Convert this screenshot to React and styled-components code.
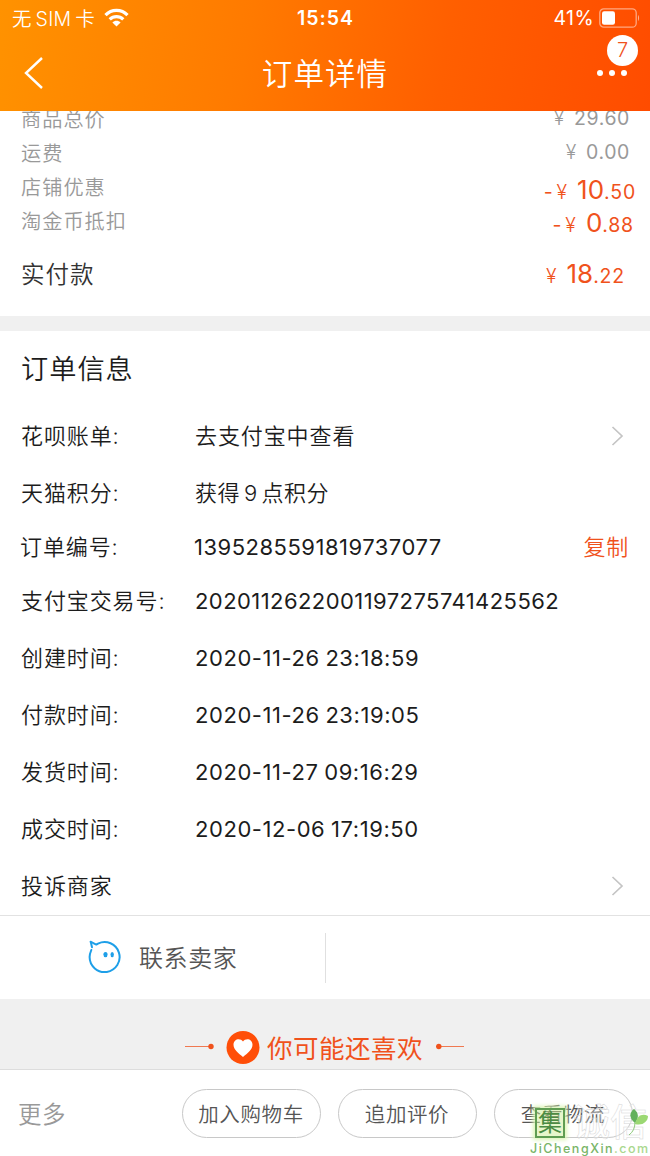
import React from 'react';
import styled, { createGlobalStyle } from 'styled-components';

const GlobalStyle = createGlobalStyle`
  * {
    box-sizing: border-box;
  }
  body {
    margin: 0;
    background: #fff;
    font-family: Inter, 'Noto Sans CJK SC', sans-serif;
    font-weight: 350;
    color: #1c1c1c;
  }
`;

const Page = styled.div`
  position: relative;
  width: 650px;
  height: 1156px;
  overflow: hidden;
  display: flex;
  flex-direction: column;
  white-space: nowrap;
`;

const Header = styled.header`
  position: relative;
  z-index: 1;
  flex: none;
  height: 111px;
  color: #fff;
  background: linear-gradient(100deg, #ff9200 0%, #ff7a00 38%, #ff5f00 68%, #ff4c00 100%);
`;

const StatusBar = styled.div`
  display: grid;
  grid-template-columns: 1fr auto 1fr;
  align-items: center;
  height: 35px;
  padding: 0 10px 0 12px;
  font-size: 19.5px;
  font-weight: 400;
`;

const Carrier = styled.div`
  display: flex;
  align-items: center;
  gap: 9px;
  font-weight: 350;
  letter-spacing: 0.3px;
  word-spacing: -2px;
`;

const Clock = styled.div`
  padding-right: 1px;
  font-size: 19.5px;
  font-weight: 600;
  letter-spacing: 1px;
`;

const Power = styled.div`
  display: flex;
  justify-content: flex-end;
  align-items: center;
  gap: 5px;
  letter-spacing: 0.4px;
`;

const NavBar = styled.div`
  display: grid;
  grid-template-columns: 1fr auto 1fr;
  align-items: center;
  height: 75px;
  padding: 0 23px;
`;

const Title = styled.h1`
  margin: 0;
  padding-bottom: 1px;
  font-size: 30.5px;
  font-weight: 350;
  letter-spacing: 1.1px;
`;

const More = styled.div`
  position: relative;
  justify-self: end;
  display: flex;
  gap: 6px;
`;

const Dot = styled.i`
  width: 6px;
  height: 6px;
  border-radius: 50%;
  background: #fff;
`;

const Badge = styled.span`
  position: absolute;
  right: -11px;
  bottom: 10px;
  width: 31px;
  height: 31px;
  border-radius: 50%;
  background: #fff;
  color: #f0521c;
  font-size: 20px;
  line-height: 31px;
  text-align: center;
`;

/* scrolled up a little, so the first line slides under the header */
const Summary = styled.section`
  flex: none;
  height: 215px;
  margin-top: -10px;
`;

const PriceRow = styled.div`
  display: flex;
  justify-content: space-between;
  align-items: center;
  height: ${props => (props.total ? '71px' : '34px')};
  padding-left: 21px;
  padding-right: ${props => props.inset}px;
  color: ${props => (props.total ? '#333' : '#999')};
  font-size: ${props => (props.total ? '23.5px' : '20.2px')};
  letter-spacing: 1px;
`;

const Price = styled.span`
  color: ${props => (props.hot ? '#f0521c' : '#999')};
  font-size: 19.5px;
  font-weight: 400;
  letter-spacing: ${props => (props.hot ? '0.8px' : '0.6px')};
  padding-top: ${props => props.drop || 0}px;

  b {
    font-size: 26px;
    font-weight: 400;
    letter-spacing: 0;
  }
`;

const Currency = styled.span`
  margin-right: 3px;
  margin-left: ${props => (props.spaced ? '3px' : '0')};
  font-weight: 350;
`;

const Strip = styled.div`
  flex: none;
  height: 15px;
  background: #f0f0f0;
`;

const OrderInfo = styled.section`
  flex: none;
  height: 585px;
  border-bottom: 1px solid #e2e2e2;
`;

const Heading = styled.h2`
  display: flex;
  align-items: center;
  height: 77px;
  margin: 0;
  padding: 0 0 5px 21px;
  font-size: 27.2px;
  font-weight: 350;
  letter-spacing: 1px;
`;

const InfoRow = styled.div`
  display: grid;
  grid-template-columns: 174px 1fr auto;
  align-items: center;
  height: ${props => props.height}px;
  padding: 0 21px 1px ${props => (props.shifted ? 20 : 21)}px;
  font-size: 22px;
`;

const Label = styled.span`
  padding-bottom: 4px;
  letter-spacing: 0.9px;
`;

const Value = styled.span`
  padding-bottom: ${props => (props.digits ? '0' : '4px')};
  font-weight: ${props => (props.digits ? 400 : 350)};
  letter-spacing: ${props => props.spacing}px;
  word-spacing: ${props => (props.digits ? '-1px' : '-2.5px')};
`;

const Copy = styled.span`
  padding-bottom: 4px;
  color: #f0521c;
  letter-spacing: 0.8px;
`;

const Arrow = styled.svg`
  margin-right: 5px;
`;

const Contact = styled.section`
  flex: none;
  display: grid;
  grid-template-columns: 326px 1fr;
  align-items: center;
  height: 83px;
`;

const ContactSeller = styled.div`
  display: flex;
  align-items: center;
  gap: 17px;
  height: 50px;
  padding: 0 0 2px 87px;
  border-right: 1px solid #e0e0e0;
  color: #555;
  font-size: 24px;
  letter-spacing: 0.6px;
`;

const Recommend = styled.section`
  flex: none;
  display: flex;
  justify-content: center;
  align-items: flex-start;
  height: 70px;
  padding-top: 31px;
  background: #f0f0f0;
  color: #f0521c;
  font-size: 25.5px;
  line-height: 37px;
`;

const RecommendTitle = styled.div`
  display: flex;
  align-items: flex-start;
  gap: 7px;
  margin: 0 13px 0 12px;
  letter-spacing: 0.5px;
  font-weight: 400;
`;

const Actions = styled.footer`
  flex: none;
  display: flex;
  align-items: center;
  gap: 17px;
  height: 87px;
  padding: 0 17px 0 18px;
  border-top: 1px solid #ddd;
`;

const MoreActions = styled.span`
  flex: 1;
  padding-bottom: 1px;
  color: #999;
  font-size: 23.5px;
  letter-spacing: 0.5px;
`;

const Pill = styled.button`
  width: 139px;
  height: 49px;
  padding: 0 1px 0 0;
  border: 1px solid #c8c8c8;
  border-radius: 25px;
  background: #fff;
  color: #555;
  font: inherit;
  font-size: 20.5px;
  letter-spacing: 0.6px;
`;

const Watermark = styled.div`
  position: absolute;
  right: 0;
  bottom: 0;
  width: 120px;
  height: 52px;
`;

const WatermarkTop = styled.div`
  display: flex;
  align-items: center;
  gap: 8px;
  height: 37px;
  padding-left: 5px;
`;

const Seal = styled.span`
  flex: none;
  width: 30px;
  height: 30px;
  border: 2px solid #5f9d52;
  background: rgba(205, 238, 150, 0.5);
  box-shadow: 0 0 4px 2px #dcf5b8;
  color: #4b8c43;
  font-size: 24px;
  font-weight: 400;
  line-height: 25px;
  text-align: center;
`;

const Ghost = styled.span`
  color: rgba(255, 255, 255, 0.3);
  font-size: 37px;
  font-weight: 500;
  line-height: 36px;
  -webkit-text-stroke: 0.5px #d6d6d6;
`;

const Leaves = styled.svg`
  position: absolute;
  right: 1px;
  top: 4px;
`;

const Domain = styled.div`
  height: 15px;
  color: #79b568;
  font-size: 12.5px;
  font-weight: 500;
  line-height: 15px;
  letter-spacing: 1.5px;

  span {
    color: #a9d88e;
  }
`;

const prices = [
  { label: '商品总价', whole: '29', cents: '.60', inset: 20 },
  { label: '运费', whole: '0', cents: '.00', inset: 20 },
  { label: '店铺优惠', whole: '10', cents: '.50', sign: '-', hot: true, inset: 14, drop: 6 },
  { label: '淘金币抵扣', whole: '0', cents: '.88', sign: '-', hot: true, inset: 16, drop: 5 },
  { label: '实付款', whole: '18', cents: '.22', hot: true, total: true, inset: 25, drop: 1 },
];

const info = [
  { label: '花呗账单:', value: '去支付宝中查看', height: 57, spacing: 0.9, arrow: true },
  { label: '天猫积分:', value: '获得 9 点积分', height: 56, spacing: 0.4 },
  { label: '订单编号:', value: '1395285591819737077', height: 53, spacing: 0.5, digits: true, copy: true, shifted: true },
  { label: '支付宝交易号:', value: '2020112622001197275741425562', height: 55, spacing: 0.43, digits: true },
  { label: '创建时间:', value: '2020-11-26 23:18:59', height: 58, spacing: 0.56, digits: true },
  { label: '付款时间:', value: '2020-11-26 23:19:05', height: 57, spacing: 0.56, digits: true },
  { label: '发货时间:', value: '2020-11-27 09:16:29', height: 57, spacing: 0.56, digits: true },
  { label: '成交时间:', value: '2020-12-06 17:19:50', height: 57, spacing: 0.56, digits: true },
  { label: '投诉商家', height: 57, arrow: true },
];

const Wifi = () => (
  <svg width="25" height="19" viewBox="0 0 25 19" fill="none" stroke="#fff" strokeWidth="3.2">
    <path d="M1.5 7.2C7.5 0.8 17.5 0.8 23.5 7.2" />
    <path d="M5.7 11.4C9.6 7.6 15.4 7.6 19.3 11.4" />
    <path d="M12.5 18.6L8.4 14.5C10.7 12.2 14.3 12.2 16.6 14.5Z" fill="#fff" stroke="none" />
  </svg>
);

const Battery = () => (
  <svg width="41" height="20" viewBox="0 0 41 20">
    <rect x="0.8" y="0.8" width="36.4" height="18.4" rx="4" fill="none" stroke="#fff" strokeOpacity="0.5" strokeWidth="1.3" />
    <rect x="3" y="3.2" width="13" height="13.6" rx="2.2" fill="#fff" />
    <path d="M39 7v6c1.4-.7 1.4-5.3 0-6z" fill="#fff" fillOpacity="0.55" />
  </svg>
);

const Chevron = () => (
  <Arrow width="13" height="20" viewBox="0 0 13 20" fill="none" stroke="#c4c4c4" strokeWidth="1.7">
    <path d="M1.5 1L11 10L1.5 19" />
  </Arrow>
);

const Bubble = () => (
  <svg width="35" height="35" viewBox="0 0 35 35" fill="none" stroke="#1e9fe8" strokeWidth="2" strokeLinecap="round" strokeLinejoin="round">
    <path d="M4.3 11C3.3 13.5 2.6 15.6 2.6 18A15 15 0 1 0 11 4.6L9.3 5.6C7.5 4.8 5.7 3.6 3.6 2.7C4.3 4.7 4.5 6.5 5 8.2" />
    <ellipse cx="18.5" cy="15.6" rx="2.1" ry="2.7" fill="#1e9fe8" stroke="none" />
    <ellipse cx="25.2" cy="15.6" rx="1.7" ry="2.7" fill="#1e9fe8" stroke="none" />
  </svg>
);

const Heart = () => (
  <svg width="34" height="34" viewBox="0 0 34 34">
    <circle cx="17" cy="17.5" r="16.5" fill="#ff4e08" />
    <path d="M17 27C12.5 23.5 7.5 19.5 7.5 14.8C7.5 8.7 14.3 7.5 17 11.5C19.7 7.5 26.5 8.7 26.5 14.8C26.5 19.5 21.5 23.5 17 27Z" fill="#fff" />
  </svg>
);

const Ornament = ({ flip }) => (
  <svg width="29" height="34" viewBox="0 0 29 34">
    <path d="M0 16.5H28" stroke="#f0521c" strokeOpacity="0.75" />
    <circle cx={flip ? 2.8 : 26} cy="16.5" r="2.7" fill="#f0521c" />
  </svg>
);

const App = () => (
  <>
    <GlobalStyle />
    <Page>
      <Header>
        <StatusBar>
          <Carrier>
            无 SIM 卡
            <Wifi />
          </Carrier>
          <Clock>15:54</Clock>
          <Power>
            41%
            <Battery />
          </Power>
        </StatusBar>
        <NavBar>
          <svg width="21" height="32" viewBox="0 0 21 32" fill="none" stroke="#fff" strokeWidth="2.4">
            <path d="M19 1L3 16L19 31" />
          </svg>
          <Title>订单详情</Title>
          <More>
            <Dot />
            <Dot />
            <Dot />
            <Badge>7</Badge>
          </More>
        </NavBar>
      </Header>

      <Summary>
        {prices.map(row => (
          <PriceRow key={row.label} total={row.total ? 1 : undefined} inset={row.inset}>
            {row.label}
            <Price hot={row.hot ? 1 : undefined} drop={row.drop}>
              {row.sign}
              <Currency spaced={row.sign ? 1 : undefined}>¥</Currency>{' '}
              {row.hot ? <b>{row.whole}</b> : row.whole}
              {row.cents}
            </Price>
          </PriceRow>
        ))}
      </Summary>

      <Strip />

      <OrderInfo>
        <Heading>订单信息</Heading>
        {info.map(row => (
          <InfoRow key={row.label} height={row.height} shifted={row.shifted ? 1 : undefined}>
            <Label>{row.label}</Label>
            <Value spacing={row.spacing} digits={row.digits ? 1 : undefined}>
              {row.value}
            </Value>
            {row.arrow && <Chevron />}
            {row.copy && <Copy>复制</Copy>}
          </InfoRow>
        ))}
      </OrderInfo>

      <Contact>
        <ContactSeller>
          <Bubble />
          联系卖家
        </ContactSeller>
      </Contact>

      <Recommend>
        <Ornament />
        <RecommendTitle>
          <Heart />
          你可能还喜欢
        </RecommendTitle>
        <Ornament flip />
      </Recommend>

      <Actions>
        <MoreActions>更多</MoreActions>
        <Pill>加入购物车</Pill>
        <Pill>追加评价</Pill>
        <Pill>查看物流</Pill>
      </Actions>

      <Watermark>
        <WatermarkTop>
          <Seal>集</Seal>
          <Ghost>诚信</Ghost>
        </WatermarkTop>
        <Leaves width="20" height="28" viewBox="0 0 20 28">
          <path d="M6 15C-1 9 1 4 5 1C10 5 10 10 6 15Z" fill="#63b15c" />
          <path d="M6 16C8 8 13 5 19 8C19 14 13 18 6 16Z" fill="#9bd873" />
          <path d="M6 14C6 20 4 24 0 27" fill="none" stroke="#8cc878" />
        </Leaves>
        <Domain>
          JiChengXin<span>.com</span>
        </Domain>
      </Watermark>
    </Page>
  </>
);

export default App;
